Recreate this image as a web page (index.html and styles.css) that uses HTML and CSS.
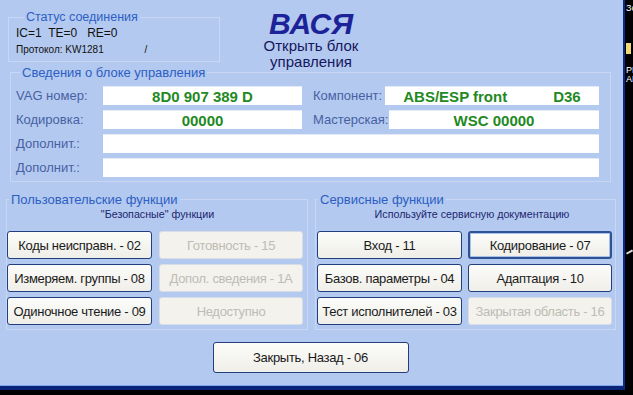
FILE: index.html
```html
<!DOCTYPE html>
<html lang="ru">
<head>
    <meta charset="UTF-8">
    <title>ВАСЯ - Открыть блок управления</title>
    <link rel="stylesheet" href="styles.css">
</head>
<body>
<div class="screen">
    <div class="window">
        <div class="top">
            <fieldset class="status">
                <legend>Статус соединения</legend>
                <div class="status-line">IC=1&nbsp; TE=0&nbsp;&nbsp; RE=0</div>
                <div class="proto">Протокол: KW1281 <span class="slash">/</span></div>
            </fieldset>
            <div class="title">
                <div class="title-big">ВАСЯ</div>
                <div class="title-sub">Открыть блок<br>управления</div>
            </div>
        </div>

        <fieldset class="info">
            <legend>Сведения о блоке управления</legend>
            <div class="row">
                <span class="lbl lbl-vag">VAG номер:</span>
                <div class="field field-short">8D0 907 389 D</div>
                <span class="lbl lbl-comp">Компонент:</span>
                <div class="field field-wide"><span>ABS/ESP front</span><span class="d36">D36</span></div>
            </div>
            <div class="row">
                <span class="lbl lbl-vag">Кодировка:</span>
                <div class="field field-short">00000</div>
                <span class="lbl lbl-shop">Мастерская:</span>
                <div class="field field-wide">WSC 00000</div>
            </div>
            <div class="row">
                <span class="lbl lbl-vag">Дополнит.:</span>
                <div class="field field-wide"></div>
            </div>
            <div class="row">
                <span class="lbl lbl-vag">Дополнит.:</span>
                <div class="field field-wide"></div>
            </div>
        </fieldset>

        <div class="groups">
            <fieldset class="group group-user">
                <legend>Пользовательские функции</legend>
                <div class="sub">"Безопасные" функции</div>
                <div class="buttons">
                    <button>Коды неисправн. - 02</button>
                    <button disabled>Готовность - 15</button>
                    <button>Измеряем. группы - 08</button>
                    <button disabled>Допол. сведения - 1A</button>
                    <button>Одиночное чтение - 09</button>
                    <button disabled>Недоступно</button>
                </div>
            </fieldset>
            <fieldset class="group group-service">
                <legend>Сервисные функции</legend>
                <div class="sub sub-service">Используйте сервисную документацию</div>
                <div class="buttons">
                    <button>Вход - 11</button>
                    <button class="focused">Кодирование - 07</button>
                    <button>Базов. параметры - 04</button>
                    <button>Адаптация - 10</button>
                    <button>Тест исполнителей - 03</button>
                    <button disabled>Закрытая область - 16</button>
                </div>
            </fieldset>
        </div>

        <div class="bottom">
            <button class="close">Закрыть, Назад - 06</button>
        </div>
    </div>
    <div class="desktop">
        <div class="d-text">Зо</div>
        <div class="folder"></div>
        <div class="d-text d-pr">PR</div>
        <div class="d-text">AD</div>
        <div class="cursor"></div>
    </div>
</div>
</body>
</html>
```
FILE: styles.css
```css
body {
    margin: 0;
    background-color: #000;
    width: 633px;
    height: 395px;
    overflow: hidden;
    font-family: "Liberation Sans", Arial, sans-serif;
}
.screen {
    display: flex;
    height: 395px;
}
.window {
    width: 623px;
    height: 386px;
    background-color: #b4c9ef;
    border-right: 2px solid #0b2a8c;
    border-bottom: 4px solid #0a2478;
    box-shadow: inset 0 -1px 0 #7ea6ec;
}
fieldset {
    box-sizing: border-box;
    margin: 0;
    padding: 0;
    border: 1px solid #c8d7f3;
}
legend {
    padding: 0 2px;
    color: #2b5fc4;
    font-size: 13px;
    line-height: 15px;
}

/* top */
.top {
    display: flex;
    height: 65px;
}
.status {
    margin: 10px 0 0 8px;
    width: 212px;
    height: 52px;
    padding: 0 0 0 7px;
}
.status legend {
    margin-left: 8px;
    font-size: 12.5px;
}
.status-line {
    font-size: 12px;
    line-height: 14px;
    color: #111;
    margin-top: 1px;
}
.proto {
    font-size: 10px;
    line-height: 12px;
    color: #111;
    margin-top: 4px;
}
.slash {
    margin-left: 38px;
}
.title {
    width: 182px;
    text-align: center;
}
.title-big {
    margin-top: 9px;
    font-size: 30px;
    line-height: 29px;
    font-weight: bold;
    font-style: italic;
    color: #1c2399;
}
.title-sub {
    font-size: 15px;
    line-height: 16px;
    color: #14175e;
}

/* info */
.info {
    margin: 0 0 0 10px;
    width: 601px;
    height: 117px;
    padding: 6px 11px 0 5px;
}
.info legend {
    margin-left: 4px;
}
.row {
    display: flex;
    align-items: center;
    height: 19px;
    margin-bottom: 5px;
}
.lbl {
    font-size: 13px;
    color: #4661a3;
    white-space: nowrap;
}
.lbl-vag {
    width: 87px;
}
.lbl-comp {
    width: 72px;
    margin-left: 11px;
}
.lbl-shop {
    width: 76px;
    margin-left: 11px;
}
.field {
    height: 19px;
    background-color: #fff;
    color: #1f8a1f;
    font-weight: bold;
    font-size: 15px;
    line-height: 19px;
    text-align: center;
    box-sizing: border-box;
    border-top: 1px solid #e4ebf7;
}
.field-short {
    width: 199px;
}
.field-wide {
    flex: 1;
}
.d36 {
    margin-left: 46px;
}

/* groups */
.groups {
    display: flex;
    margin-top: 10px;
}
.group {
    height: 138px;
    padding: 0 0 0 1px;
}
.group-user {
    margin-left: 6px;
    width: 302px;
}
.group-service {
    margin-left: 7px;
    width: 301px;
}
.group legend {
    margin-left: 1px;
}
.sub {
    text-align: center;
    font-size: 10.7px;
    line-height: 12px;
    color: #1b2670;
    margin: 1px 0 11px;
}
.sub-service {
    padding-left: 12px;
}
.buttons {
    display: grid;
    grid-template-columns: 145px 144px;
    grid-auto-rows: 28px;
    gap: 5px 7px;
}
.group-user .buttons {
    margin-left: -1px;
}
.group-service .buttons {
    column-gap: 6px;
}
button {
    font-family: "Liberation Sans", Arial, sans-serif;
    font-size: 13px;
    letter-spacing: -0.3px;
    color: #1a1a1a;
    background: linear-gradient(#fcfcfa, #efeee8);
    border: 1px solid #203f7c;
    border-radius: 3px;
    padding: 0;
    white-space: nowrap;
}
button:disabled {
    background: #f3f2ec;
    border-color: #d9dde6;
    color: #bdbdb5;
}
button.focused {
    border: 2px solid #2d5296;
    box-shadow: inset 0 0 0 1px #a9c0ea;
}

/* bottom */
.bottom {
    display: flex;
    justify-content: center;
    margin-top: 12px;
    padding-right: 2px;
}
.close {
    width: 196px;
    height: 31px;
}

/* desktop strip */
.desktop {
    flex: 1;
    padding: 4px 0 0 1px;
    overflow: hidden;
}
.d-text {
    color: #fff;
    font-size: 9px;
    line-height: 9px;
}
.folder {
    width: 5px;
    height: 11px;
    margin-top: 30px;
    background-color: #f0d873;
}
.d-pr {
    margin-top: 12px;
}
.cursor {
    width: 7px;
    height: 2px;
    margin-top: 167px;
    background-color: #ddd;
    transform: rotate(-30deg);
}
```
